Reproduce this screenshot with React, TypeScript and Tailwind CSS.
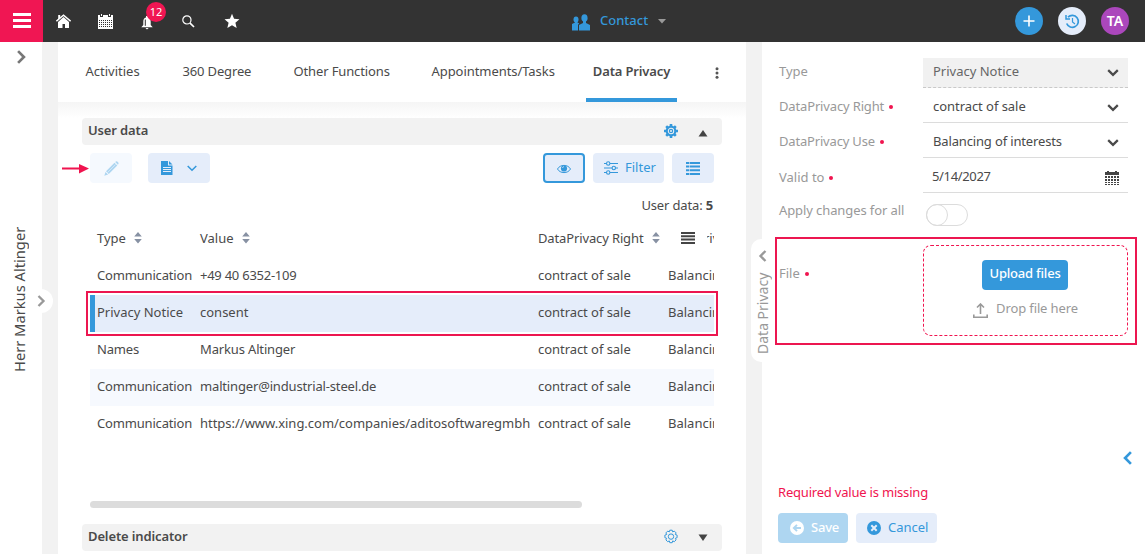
import type { ReactNode } from 'react';
import clsx from 'clsx';

const tabs = [
  { label: 'Activities', width: 'w-[56px]' },
  { label: '360 Degree', width: 'w-[70px] tracking-[-0.15px]' },
  { label: 'Other Functions', width: 'w-[97px] tracking-[-0.13px]' },
  { label: 'Appointments/Tasks', width: 'w-[124px] tracking-[-0.06px]' },
];

const rows = [
  { type: 'Communication', value: '+49 40 6352-109', tracking: 'tracking-[-0.25px]' },
  { type: 'Privacy Notice', value: 'consent', selected: true },
  { type: 'Names', value: 'Markus Altinger', tracking: 'tracking-[-0.15px]' },
  { type: 'Communication', value: 'maltinger@industrial-steel.de', tracking: 'tracking-[-0.16px]', striped: true },
  { type: 'Communication', value: 'https://www.xing.com/companies/aditosoftwaregmbh', tracking: 'tracking-[-0.02px]' },
];

function Chevron({ className, dir = 'down' }: { className?: string; dir?: 'down' | 'left' | 'right' }) {
  const paths = { down: 'M1.2 3.2L6 7.800 10.800 3.200', left: 'M8.5 1L3.5 6l5 5', right: 'M3.5 1l5 5-5 5' };
  return (
    <svg viewBox="0 0 12 12" fill="none" stroke="currentColor" strokeWidth="2.3" className={clsx('shrink-0', className ?? 'size-3')}>
      <path d={paths[dir]} />
    </svg>
  );
}

function SortIcon() {
  return (
    <svg viewBox="0 0 8 12" className="w-2 h-3 ml-2 shrink-0" fill="#8791a3">
      <path d="M4 0l3.8 4.6H.2zM4 11.5L.2 6.9h7.6z" />
    </svg>
  );
}

function GearIcon({ filled }: { filled?: boolean }) {
  return (
    <svg viewBox="0 0 16 16" className="size-4" fill="none" stroke="#3498db">
      {filled ? (
        <>
          <circle cx="8" cy="8" r="4.300" strokeWidth="2.200" />
          <path
            d="M8 1v2.500M8 12.500V15M1 8h2.500M12.500 8H15M3.200 3.200l1.600 1.600M11.200 11.200l1.600 1.600M12.800 3.200l-1.600 1.600M4.800 11.200l-1.600 1.600"
            strokeWidth="2.600"
          />
          <circle cx="8" cy="8" r="1.600" strokeWidth="1.300" />
        </>
      ) : (
        <>
          <path d="M6.8 1.2h2.4l.5 1.7 1.6-.8 1.8 1.8-.8 1.6 1.8.6v2.6l-1.8.6.8 1.6-1.8 1.8-1.6-.8-.5 1.8H6.8l-.5-1.8-1.6.8-1.8-1.8.8-1.6-1.8-.6V6.1l1.800-.6-.8-1.600 1.800-1.800 1.600.8z" strokeLinejoin="round" />
          <circle cx="8" cy="7.6" r="2.7" />
        </>
      )}
    </svg>
  );
}

function SectionHeader({ title, open }: { title: string; open?: boolean }) {
  return (
    <div className="flex items-center h-[27px] bg-[#f2f2f2] rounded-[4px] pl-1.5 pr-3">
      <h2 className="font-semibold flex-1 pb-1 tracking-[-0.13px]">{title}</h2>
      <span className="pb-px">
        <GearIcon filled={open} />
      </span>
      <svg viewBox="0 0 10 8" className={clsx('w-2.5 h-2 ml-[19px] mr-[2px]', open && 'mt-0.5')} fill="#444">
        <path d={open ? 'M5 1L9.500 7.500h-9z' : 'M.5 .5h9L5 7z'} />
      </svg>
    </div>
  );
}

function Label({ required, className, children }: { required?: boolean; className?: string; children: ReactNode }) {
  return (
    <div className={clsx('flex items-center w-[144px] h-[26px] text-[#999]', className)}>
      {children}
      {required && <span className="size-1 rounded-full bg-[#f0144f] ml-[5px] mt-px" />}
    </div>
  );
}

function Field({ label, required, disabled, className, children }: { label: string; required?: boolean; disabled?: boolean; className?: string; children: ReactNode }) {
  return (
    <div className="flex h-[35px]">
      <Label required={required} className={className}>{label}</Label>
      <div
        className={clsx(
          'flex items-center w-[205px] h-[30px] pl-2.5 pr-[9px] border-b',
          disabled ? 'bg-[#f1f1f1] border-dashed border-[#c9c9c9]' : 'border-[#dcdcdc]',
        )}
      >
        {children}
      </div>
    </div>
  );
}

function TopBar() {
  return (
    <header className="flex items-center h-[42px] bg-[#333] text-white shrink-0">
      <div className="flex flex-col items-center justify-center gap-[3px] w-[43px] h-[42px] bg-[#f01653] pb-[2px]">
        <span className="w-[18px] h-[3px] bg-white" />
        <span className="w-[18px] h-[3px] bg-white" />
        <span className="w-[18px] h-[3px] bg-white" />
      </div>
      <svg viewBox="0 0 15 14" className="w-[15px] h-[14px] ml-[13px]" fill="#fff">
        <path d="M7.5 3L13 8v6H9v-4H6.500v4H2V8z" />
        <path d="M.4 7.200L7.500 1.200l7.100 6" fill="none" stroke="#fff" strokeWidth="1.400" />
        <path d="M2.200 1h2v3l-2 1.300z" />
      </svg>
      <svg viewBox="0 0 15 15" className="size-[15px] ml-[27px]" fill="#fff" shapeRendering="crispEdges">
        <path d="M0 1h2v2h3V1h5v2h3V1h2v14H0zM3 0h1v2H3zM11 0h1v2h-1z" />
        {[6, 8, 10, 12].map((y) =>
          [1, 3, 5, 7, 9, 11, 13].map((x) => <rect key={`${x}-${y}`} x={x} y={y} width="1" height="1" fill="#333" />),
        )}
      </svg>
      <div className="relative w-[12px] h-[15px] ml-[28px] mt-0.5">
        <svg viewBox="0 0 12 15" className="w-[12px] h-[15px]" fill="#fff">
          <path d="M5 1h2v1.500C9 3 9.700 4.500 9.700 7v3l2 2.300H.3l2-2.300V7c0-2.500.7-4 2.700-4.500zM4.500 13h3.200L6 14.500z" />
          <path d="M4.300 4.500v6.300" stroke="#333" />
        </svg>
        <span className="absolute left-[5px] top-[-13px] flex items-center justify-center size-5 rounded-full bg-[#f01653] text-[11px] leading-none">
          12
        </span>
      </div>
      <svg viewBox="0 0 13 13" className="size-[13px] ml-[29px]" fill="none" stroke="#fff">
        <circle cx="4.900" cy="4.900" r="4.100" strokeWidth="1.200" />
        <path d="M7.800 7.800l4.200 4.200" strokeWidth="1.700" />
      </svg>
      <svg viewBox="0 0 24 24" className="size-4 ml-[28.5px]" fill="#fff">
        <path d="M12 1l3.100 7.500 8.100.7-6.100 5.300 1.900 8L12 18.300 5 22.500l1.900-8L.8 9.200l8.100-.7z" />
      </svg>
      <svg viewBox="0 0 18 17" className="w-[18px] h-[17px] ml-[332.5px] mt-0.5" fill="#3498db">
        <ellipse cx="4" cy="5.500" rx="2.500" ry="3" />
        <path d="M0 10l3-1.500V7h2.500v1.500L7.300 9.500 6 10.800V16.500H0z" />
        <ellipse cx="12.500" cy="4" rx="3.100" ry="3.800" />
        <path d="M7 11l4-2V7h3v2l4 2v5.500H7z" />
      </svg>
      <span className="text-[#3498db] font-medium w-[49px] ml-[10px] mb-0.5">Contact</span>
      <svg viewBox="0 0 8 5" className="w-2 h-[5px] ml-[9px]" fill="#999">
        <path d="M0 0h8L4 4.500z" />
      </svg>
      <div className="flex items-center gap-[15px] ml-auto mr-4">
        <span className="flex items-center justify-center size-7 rounded-full bg-[#3498db]">
          <svg viewBox="0 0 12 12" className="size-3" stroke="#fff" strokeWidth="1.600">
            <path d="M6 .5v11M.5 6h11" />
          </svg>
        </span>
        <span className="flex items-center justify-center size-7 rounded-full bg-[#e5edfa]">
          <svg viewBox="0 0 15 15" className="size-[15px]" fill="none" stroke="#3498db">
            <path d="M3 3.200A6 6 0 1 1 1.700 9.500" strokeWidth="1.700" />
            <path d="M1 1v4h4" strokeWidth="1.500" />
            <path d="M7.500 4v4l2.500 2" strokeWidth="1.200" />
          </svg>
        </span>
        <span className="flex items-center justify-center size-7 rounded-full bg-[#ab47bc] font-semibold text-sm">TA</span>
      </div>
    </header>
  );
}

function LeftRail() {
  return (
    <aside className="relative flex flex-col items-center w-[42px] shrink-0">
      <Chevron dir="right" className="size-[14px] mt-2 text-[#777]" />
      <span className="[writing-mode:vertical-rl] rotate-180 whitespace-nowrap text-[14.7px] leading-5 mt-[162px] -ml-1 h-[146px]">
        Herr Markus Altinger
      </span>
      <span className="absolute left-[29px] top-[247px] flex items-center justify-center size-6 rounded-full bg-white">
        <Chevron dir="right" className="size-3 text-[#999]" />
      </span>
    </aside>
  );
}

function Toolbar() {
  return (
    <div className="flex items-center h-[30px] mt-2 ml-2 mr-2 text-[#3498db]">
      <span className="flex items-center justify-center w-[42px] h-[30px] rounded bg-[#f5f9fe]">
        <svg viewBox="0 0 15 15" className="size-[15px]" fill="#aed6f1">
          <path d="M10.500 1.700l2.800 2.800-8.500 8.500-2.800-2.800zM11.200 1c1-1 1.700-1 2.700 0s.9 1.700 0 2.700zM1.500 10.900l2.600 2.600L.3 14.700z" />
          <path d="M3.500 11.500l8-8" stroke="#f5f9fe" strokeWidth=".5" />
        </svg>
      </span>
      <span className="flex items-center w-[62px] h-[30px] rounded bg-[#e5edfa] ml-4 pl-[13px] gap-[14px]">
        <svg viewBox="0 0 12 14" className="w-3 h-3.5" fill="#3498db">
          <path d="M0 0h7v4.500h4.500V14H0zM8 0l3.500 3.500H8z" />
          <path d="M2 6.500h8M2 8.500h8M2 10.500h8" stroke="#e5edfa" />
        </svg>
        <svg viewBox="0 0 10 7" className="w-2.5 h-[7px]" fill="none" stroke="#3498db" strokeWidth="1.500">
          <path d="M.7 1L5 5.300 9.300 1" />
        </svg>
      </span>
      <span className="flex items-center justify-center w-[42px] h-[30px] rounded bg-[#e5edfa] border-2 border-[#3498db] ml-auto">
        <svg viewBox="0 0 14 10" className="w-3.5 h-2.5 mt-px" fill="none" stroke="#3498db">
          <path d="M.5 5C3 .2 11 .2 13.500 5 11 9.800 3 9.800.5 5z" />
          <circle cx="7" cy="4.500" r="3.100" fill="#3498db" stroke="none" />
          <path d="M5.500 4c.2-1 .8-1.300 1.500-1.300" stroke="#e5edfa" strokeWidth=".8" />
        </svg>
      </span>
      <span className="flex items-center w-[71px] h-[30px] rounded bg-[#e5edfa] ml-2 pl-[11px]">
        <svg viewBox="0 0 14 14" className="size-3.5" fill="none" stroke="#3498db" strokeWidth="1.100">
          <path d="M0 2.500h2.500m3.500 0h8M0 7h8m3.500 0H14M0 11.500h2.500m3.500 0h8" />
          <circle cx="4.200" cy="2.500" r="1.700" />
          <circle cx="9.800" cy="7" r="1.700" />
          <circle cx="4.200" cy="11.500" r="1.700" />
        </svg>
        <span className="ml-[7px] pb-0.5 text-[13px]">Filter</span>
      </span>
      <span className="flex items-center justify-center w-[42px] h-[30px] rounded bg-[#e5edfa] ml-2">
        <svg viewBox="0 0 14 13" className="w-3.5 h-[13px]" stroke="#3498db" strokeWidth="2">
          <path d="M0 1h3m.6 0H14M0 4.600h3m.6 0H14M0 8.300h3m.6 0H14M0 12h3m.6 0H14" />
        </svg>
      </span>
    </div>
  );
}

function DataTable() {
  return (
    <div className="relative mx-2">
      <div className="overflow-hidden">
        <div className="flex items-center h-[38px] pb-0.5 whitespace-nowrap">
          <div className="flex items-center w-[103px] pl-[7px] shrink-0">Type<SortIcon /></div>
          <div className="flex items-center w-[338px] pl-[7px] shrink-0">Value<SortIcon /></div>
          <div className="flex items-center w-[130px] pl-[7px] shrink-0">
            <span className="w-[106px] tracking-[-0.13px]">DataPrivacy Right</span>
            <SortIcon />
          </div>
          <svg viewBox="0 0 14 12" className="w-3.5 h-3 ml-5 shrink-0" stroke="#444" strokeWidth="2">
            <path d="M0 1h14M0 4.300h14M0 7.600h14M0 11h14" />
          </svg>
          <div className="overflow-hidden ml-3 shrink-0">
            <span className="-ml-[3px]">rivacy Use</span>
          </div>
        </div>
        {rows.map((row, i) => (
          <div
            key={i}
            className={clsx(
              'flex items-center h-[37px] pb-[3px] whitespace-nowrap',
              row.selected && 'bg-[#e5edfa] border-l-[5px] border-[#3498db]',
              row.striped && 'bg-[#f6f9fe]',
            )}
          >
            <div
              className={clsx(
                'shrink-0',
                row.selected ? 'w-[98px] pl-0.5' : 'w-[103px] pl-[7px]',
                !row.selected && 'tracking-[-0.17px]',
              )}
            >
              {row.type}
            </div>
            <div className={clsx('w-[338px] pl-[7px] shrink-0', row.tracking)}>{row.value}</div>
            <div className="w-[130px] pl-[7px] shrink-0 tracking-[-0.05px]">contract of sale</div>
            <div className="pl-[7px] shrink-0">Balancing of interests</div>
          </div>
        ))}
      </div>
      <div className="absolute left-[-4px] right-[-4px] top-[71px] h-[45px] border-2 border-[#ec1650]" />
    </div>
  );
}

function MainPanel() {
  return (
    <main className="relative w-[688px] shrink-0 bg-white overflow-hidden">
      <nav className="flex items-center h-[60px] pl-[27.5px] whitespace-nowrap">
        <div className="flex gap-[41px] pb-0.5">
          {tabs.map((tab) => (
            <span key={tab.label} className={tab.width}>{tab.label}</span>
          ))}
        </div>
        <span className="flex items-center justify-center h-[60px] w-[91px] ml-[30.5px] font-semibold border-b-4 border-[#3498db] pt-[2px] tracking-[-0.15px]">
          Data Privacy
        </span>
        <svg viewBox="0 0 4 12" className="w-1 h-3 ml-[37.5px] mt-px" fill="#555">
          <circle cx="2" cy="1.700" r="1.500" />
          <circle cx="2" cy="6" r="1.500" />
          <circle cx="2" cy="10.300" r="1.500" />
        </svg>
      </nav>
      <div className="h-4 bg-linear-to-b from-[#f5f5f5] to-white" />
      <div className="pl-6 pr-6">
        <SectionHeader title="User data" open />
        <Toolbar />
        <div className="text-right pr-[9px] mt-3 h-[25px] tracking-[-0.15px]">
          User data: <b>5</b>
        </div>
        <DataTable />
        <div className="w-[492px] h-[7px] rounded-full bg-[#dcdcdc] ml-2 mt-[58px] mb-4" />
        <SectionHeader title="Delete indicator" />
      </div>
      <svg viewBox="0 0 28 10" className="absolute left-1 top-[122px] w-7 h-2.5" fill="#f0144f">
        <path d="M0 3.500h17V0l10 4.500L17 9.500V5.500H0z" />
      </svg>
    </main>
  );
}

function EditPanel() {
  return (
    <section className="relative flex-1 bg-white pl-[17px] pt-4 whitespace-nowrap">
      <Field label="Type" disabled>
        <span className="flex-1 pb-[3px] text-[#666]">Privacy Notice</span>
        <Chevron />
      </Field>
      <Field label="DataPrivacy Right" required className="tracking-[-0.15px]">
        <span className="flex-1 pb-[3px] tracking-[-0.05px]">contract of sale</span>
        <Chevron />
      </Field>
      <Field label="DataPrivacy Use" required className="tracking-[-0.18px]">
        <span className="flex-1 pb-[3px] tracking-[-0.15px]">Balancing of interests</span>
        <Chevron />
      </Field>
      <Field label="Valid to" required className="pt-0.5">
        <span className="flex-1 pb-[3px] -ml-px tracking-[-0.35px]">5/14/2027</span>
        <svg viewBox="0 0 14 15" className="w-3.5 h-[15px] mt-0.5" fill="#444" shapeRendering="crispEdges">
          <path d="M0 1h14v3H0zM2 0h2v1H2zM10 0h2v1h-2z" />
          {[5, 8, 11, 13].map((y) =>
            [0, 3, 6, 9, 12].map((x) => <rect key={`${x}-${y}`} x={x} y={y} width="2" height={y > 10 ? 1 : 2} />),
          )}
        </svg>
      </Field>
      <div className="flex h-[47px]">
        <Label className="tracking-[-0.1px] -mt-px">Apply changes for all</Label>
        <div className="w-[42px] h-[22px] rounded-full border border-[#dcdcdc] ml-[3px] mt-[6px]">
          <div className="size-[22px] -ml-px -mt-px rounded-full border border-[#dcdcdc]" />
        </div>
      </div>
      <div className="flex">
        <div className="pt-[15px]">
          <Label required>File</Label>
        </div>
        <div className="flex flex-col items-center w-[205px] h-[91px] rounded-lg border border-dashed border-[#f0144f] pt-[14px]">
          <button className="w-[86px] h-[30px] -ml-px rounded bg-[#3498db] text-white font-medium tracking-[-0.2px] pb-1">
            Upload files
          </button>
          <div className="flex items-center mt-2 text-[#999]">
            <svg viewBox="0 0 15 15" className="size-[15px] mt-1" fill="none" stroke="#999" strokeWidth="1.600">
              <path d="M7.500 11V1M4 4.500L7.500 1 11 4.500M.8 11.500v2.700h13.400v-2.700" />
            </svg>
            <span className="ml-2 tracking-[-0.12px]">Drop file here</span>
          </div>
        </div>
      </div>
      <p className="mt-[146px] h-[31px] -ml-px text-[#f0144f] tracking-[-0.2px]">Required value is missing</p>
      <div className="flex gap-2 -ml-px">
        <button className="flex items-center w-[70px] h-[30px] rounded bg-[#aed6f1] text-white pl-3">
          <svg viewBox="0 0 14 14" className="size-3.5" fill="none" stroke="#aed6f1" strokeWidth="1.900">
            <circle cx="7" cy="7" r="7" fill="#fff" stroke="none" />
            <path d="M11 7H4M7 3.800L3.800 7 7 10.200" />
          </svg>
          <span className="ml-[7px] pb-0.5 font-medium tracking-[-0.2px]">Save</span>
        </button>
        <button className="flex items-center w-[81px] h-[30px] rounded bg-[#e5edfa] text-[#3498db] pl-[11px]">
          <svg viewBox="0 0 14 14" className="size-3.5" fill="none" stroke="#e5edfa" strokeWidth="2">
            <circle cx="7" cy="7" r="7" fill="#3498db" stroke="none" />
            <path d="M4.300 4.300l5.400 5.400M9.700 4.300L4.300 9.700" />
          </svg>
          <span className="ml-[7px] pb-0.5">Cancel</span>
        </button>
      </div>
      <div className="absolute left-[13px] top-[195px] w-[362px] h-[108px] border-2 border-[#ec1650]" />
      <Chevron dir="left" className="absolute left-[359px] top-[409px] size-[14px] text-[#3498db]" />
      <div className="absolute -left-[11px] top-[197px] flex flex-col items-center w-[24px] h-[123px] rounded-l-[10px] bg-white text-[#999] pt-[11px]">
        <Chevron dir="left" />
        <span className="[writing-mode:vertical-rl] rotate-180 text-[14px] leading-4 mt-[4px] -ml-px h-[88px]">Data Privacy</span>
      </div>
    </section>
  );
}

export default function App() {
  return (
    <div className="flex flex-col w-[1145px] h-[554px] overflow-hidden bg-white font-['Noto_Sans',sans-serif] text-[13px] leading-5 text-[#4a4a4a]">
      <TopBar />
      <div className="flex flex-1 min-h-0">
        <LeftRail />
        <div className="w-4 bg-[#f2f2f2] shrink-0" />
        <MainPanel />
        <div className="w-4 bg-[#f2f2f2] shrink-0" />
        <EditPanel />
      </div>
    </div>
  );
}
